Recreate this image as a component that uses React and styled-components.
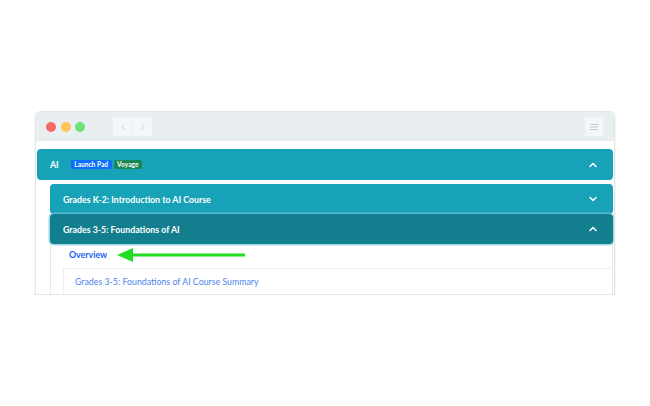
import React from "react";
import styled, { createGlobalStyle } from "styled-components";
import { ChevronUp, ChevronDown, ChevronLeft, ChevronRight } from "lucide-react";

const GlobalStyle = createGlobalStyle`
  html, body {
    margin: 0;
    padding: 0;
    background: #ffffff;
  }
  body {
    font-family: "Lato", "Noto Sans", Arial, sans-serif;
    -webkit-font-smoothing: antialiased;
  }
`;

const Page = styled.div`
  padding: 111px 0 0 35px;
`;

const Window = styled.div`
  box-sizing: border-box;
  width: 580px;
  height: 184px;
  border: 1px solid #e3e8eb;
  border-radius: 6px 6px 0 0;
  overflow: hidden;
  background: #ffffff;
  box-shadow: 0 1px 2px rgba(0, 0, 0, 0.14);
`;

const TitleBar = styled.div`
  display: flex;
  align-items: center;
  height: 29px;
  padding: 0 11px 0 10px;
  background: #e9eef1;
`;

const Dots = styled.div`
  display: flex;
  gap: 4.5px;
`;

const Dot = styled.span`
  width: 10px;
  height: 10px;
  border-radius: 50%;
  background: ${({ $color }) => $color};
`;

const NavGroup = styled.div`
  display: flex;
  gap: 1px;
  margin-left: 28px;
`;

const NavButton = styled.div`
  display: flex;
  align-items: center;
  justify-content: center;
  width: 19px;
  height: 19px;
  background: #f4f7f9;
  color: #b3bbc0;
`;

const MenuButton = styled(NavButton)`
  width: 18px;
  margin-left: auto;
`;

const Content = styled.div`
  padding: 8px 1px 0 1px;
`;

const Bar = styled.div`
  display: flex;
  align-items: center;
  box-sizing: border-box;
  height: ${({ $height }) => $height || 31}px;
  padding: 0 14px 0 13px;
  border-radius: 4px;
  background: ${({ $active }) => ($active ? "#137f8e" : "#17a2b8")};
  box-shadow: ${({ $active }) =>
    $active ? "0 0 0 1.5px rgba(120, 200, 215, 0.7)" : "none"};
  color: #ffffff;
  font-size: 8.8px;
  font-weight: 700;
  position: relative;
`;

const BarTitle = styled.span`
  flex: 1;
  display: flex;
  align-items: center;
  gap: 2px;
`;

const AiLabel = styled.span`
  margin-right: 10px;
`;

const Badge = styled.span`
  display: inline-flex;
  align-items: center;
  height: 9px;
  padding: 0 3.5px;
  border-radius: 2px;
  background: ${({ $color }) => $color};
  color: #ffffff;
  font-size: 6.6px;
  font-weight: 700;
  line-height: 1;
`;

const Nested = styled.div`
  margin: 4px 0 0 13px;
`;

const PanelBody = styled.div`
  border-left: 1px solid #e6e9eb;
  border-right: 1px solid #e6e9eb;
`;

const OverviewRow = styled.div`
  display: flex;
  align-items: center;
  box-sizing: border-box;
  height: 24px;
  padding: 0 0 3px 18px;
`;

const OverviewLink = styled.span`
  color: #1463f0;
  font-size: 8.8px;
  font-weight: 700;
`;

const Arrow = styled.svg`
  margin-left: 10px;
  display: block;
`;

const SummaryBox = styled.div`
  display: flex;
  align-items: center;
  box-sizing: border-box;
  height: 26px;
  margin-left: 12px;
  padding: 0 0 1px 11px;
  border-top: 1px solid #eceff1;
  border-left: 1px solid #eceff1;
  color: #4d84ec;
  font-size: 8.8px;
  font-weight: 400;
`;

const Chevron = ({ up }) =>
  up ? (
    <ChevronUp size={12} strokeWidth={3} color="#ffffff" />
  ) : (
    <ChevronDown size={12} strokeWidth={3} color="#ffffff" />
  );

export default function App() {
  return (
    <>
      <GlobalStyle />
      <Page>
        <Window>
          <TitleBar>
            <Dots>
              <Dot $color="#f56b6b" />
              <Dot $color="#fbc55a" />
              <Dot $color="#6ee07a" />
            </Dots>
            <NavGroup>
              <NavButton>
                <ChevronLeft size={10} strokeWidth={1.5} />
              </NavButton>
              <NavButton>
                <ChevronRight size={10} strokeWidth={1.5} />
              </NavButton>
            </NavGroup>
            <MenuButton>
              <svg width="10" height="8" viewBox="0 0 10 8">
                <g stroke="#c3c9cd" strokeWidth="1">
                  <line x1="1" y1="1.5" x2="9" y2="1.5" />
                  <line x1="1" y1="4" x2="9" y2="4" />
                  <line x1="1" y1="6.5" x2="9" y2="6.5" />
                </g>
              </svg>
            </MenuButton>
          </TitleBar>
          <Content>
            <Bar>
              <BarTitle>
                <AiLabel>AI</AiLabel>
                <Badge $color="#0d6efd">Launch Pad</Badge>
                <Badge $color="#198754">Voyage</Badge>
              </BarTitle>
              <Chevron up />
            </Bar>
            <Nested>
              <Bar $height={30}>
                <BarTitle>Grades K-2: Introduction to AI Course</BarTitle>
                <Chevron />
              </Bar>
              <Bar $height={30} $active>
                <BarTitle>Grades 3-5: Foundations of AI</BarTitle>
                <Chevron up />
              </Bar>
              <PanelBody>
                <OverviewRow>
                  <OverviewLink>Overview</OverviewLink>
                  <Arrow width="128" height="14" viewBox="0 0 128 14">
                    <polygon points="0,7 16,0 16,14" fill="#22dd22" />
                    <rect x="15" y="5.5" width="113" height="3" fill="#22dd22" />
                  </Arrow>
                </OverviewRow>
                <SummaryBox>Grades 3-5: Foundations of AI Course Summary</SummaryBox>
              </PanelBody>
            </Nested>
          </Content>
        </Window>
      </Page>
    </>
  );
}
